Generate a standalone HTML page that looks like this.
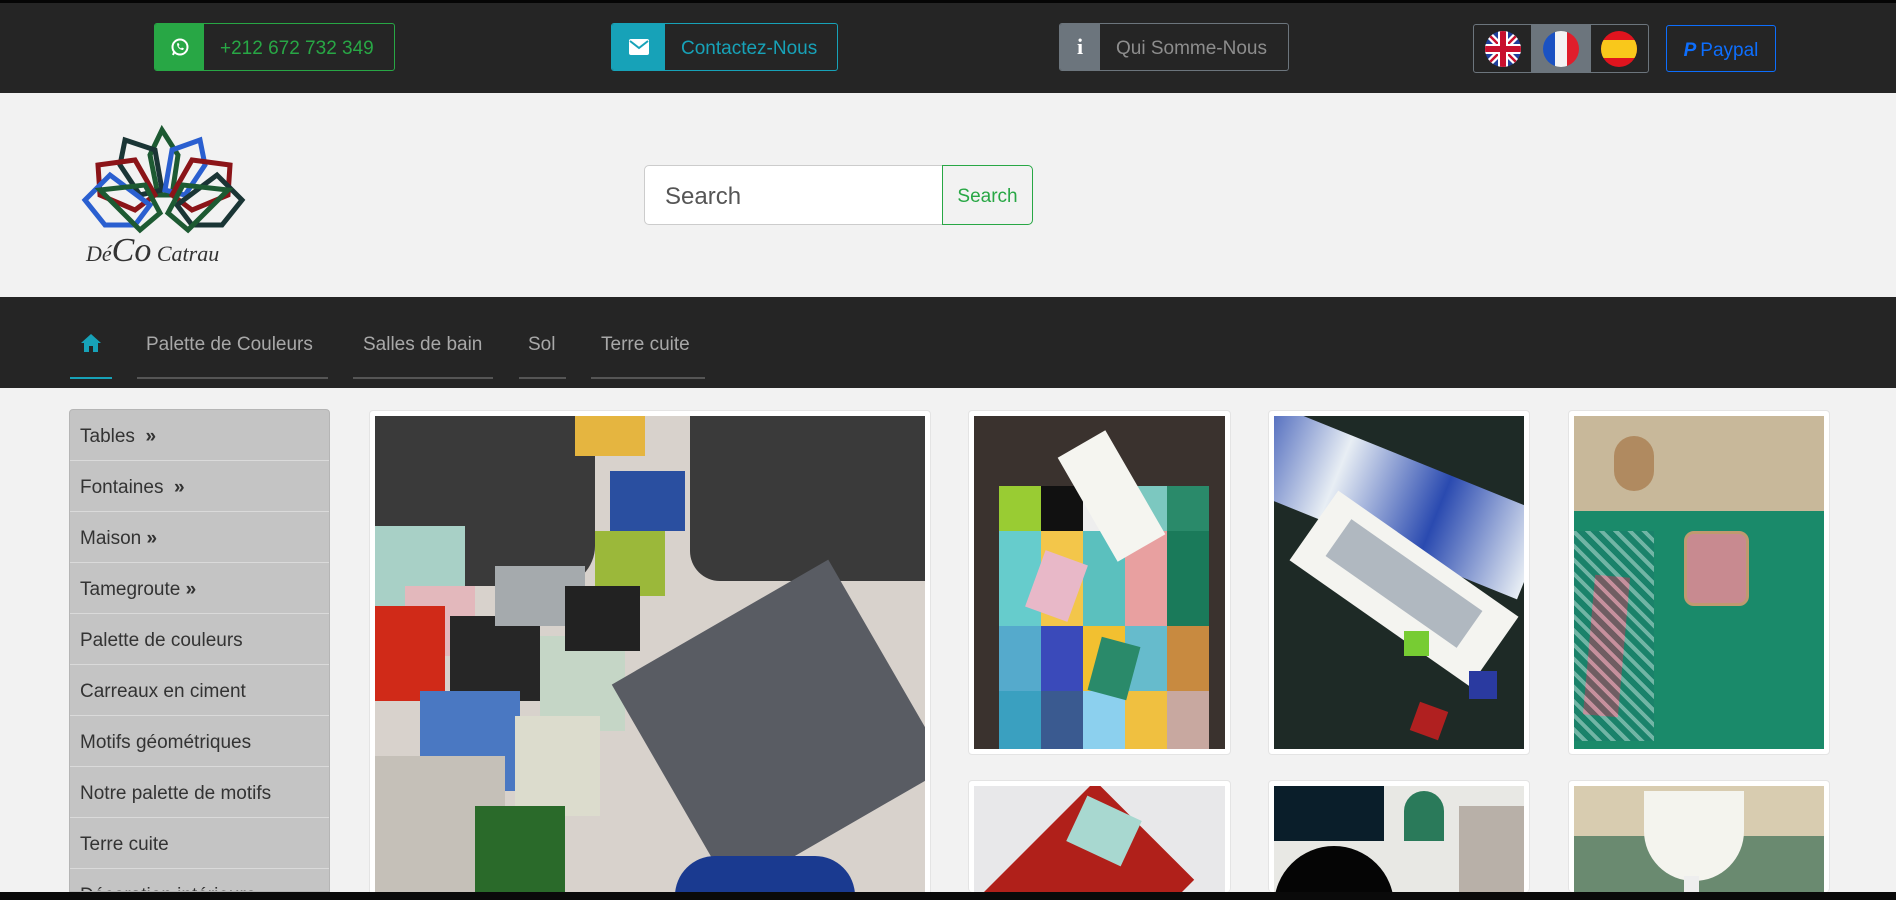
<!DOCTYPE html>
<html style="width:1896px;height:900px;overflow:hidden"><head><meta charset="utf-8"><style>
*{box-sizing:border-box;margin:0;padding:0}
body{width:1896px;height:900px;overflow:hidden;background:#f2f2f2;font-family:"Liberation Sans",sans-serif;position:relative}
.abs{position:absolute}
.top{left:0;top:0;width:1896px;height:93px;background:#252525;border-top:3px solid #050505}
.btn{position:absolute;border-radius:3px;display:flex;overflow:hidden;font-size:19px}
.btn .ic{display:flex;align-items:center;justify-content:center;color:#fff}
.btn .tx{display:flex;align-items:center;padding-left:16px;padding-top:4px}
.hdr{left:0;top:93px;width:1896px;height:204px;background:#f2f2f2}
.nav{left:0;top:297px;width:1896px;height:91px;background:#252525}
.nav .it{position:absolute;top:37px;color:#a8a8a8;font-size:19px}
.side{left:69px;top:409px;width:261px;height:483px;overflow:hidden;background:#c4c4c4;border:1px solid #b5b5b5;border-radius:4px 4px 0 0}
.side div{height:51px;border-bottom:1px solid #dadada;padding-left:10px;font-size:19px;color:#333;line-height:54px}
.card{position:absolute;background:#fff;border:1px solid #e4e4e4;border-radius:4px;padding:5px;overflow:hidden}
.img{width:100%;height:100%;position:relative;overflow:hidden}
.t{position:absolute}
</style></head><body>
<div class="abs top"></div>
<div class="btn" style="left:154px;top:23px;width:241px;height:48px;border:1px solid #28a745">
 <div class="ic" style="width:49px;background:#28a745"><svg width="20" height="20" viewBox="0 0 20 20"><circle cx="10" cy="10" r="7.5" fill="none" stroke="#fff" stroke-width="2"/><path d="M3 18l1.5-4" stroke="#fff" stroke-width="2"/><path d="M7 6.5c0 4 3 6.5 6 6.5l1-1.5-2-1-1 1c-1-.5-2-1.5-2.5-2.5l1-1-1-2z" fill="#fff"/></svg></div>
 <div class="tx" style="color:#28a745">+212 672 732 349</div></div>
<div class="btn" style="left:611px;top:23px;width:227px;height:48px;border:1px solid #17a2b8">
 <div class="ic" style="width:53px;background:#17a2b8"><svg width="20" height="16"><rect x="0" y="0" width="20" height="16" rx="2" fill="#fff"/><path d="M1 2l9 7 9-7" stroke="#17a2b8" stroke-width="2" fill="none"/></svg></div>
 <div class="tx" style="color:#17a2b8">Contactez-Nous</div></div>
<div class="btn" style="left:1059px;top:23px;width:230px;height:48px;border:1px solid #6c757d">
 <div class="ic" style="width:40px;background:#6c757d;font-weight:bold;font-size:22px;font-family:'Liberation Serif',serif">i</div>
 <div class="tx" style="color:#8d8d8d">Qui Somme-Nous</div></div>
<div class="btn" style="left:1473px;top:24px;width:176px;height:49px;border:1px solid #6c757d">
 <div style="width:58px;display:flex;align-items:center;justify-content:center"><svg width="38" height="38" viewBox="0 0 38 38"><defs><clipPath id="c1"><circle cx="19" cy="19" r="18"/></clipPath></defs><g clip-path="url(#c1)"><rect width="38" height="38" fill="#1f3f9b"/><path d="M0 0L38 38M38 0L0 38" stroke="#fff" stroke-width="7"/><path d="M0 0L38 38M38 0L0 38" stroke="#c8102e" stroke-width="2.5"/><path d="M19 0V38M0 19H38" stroke="#fff" stroke-width="10"/><path d="M19 0V38M0 19H38" stroke="#c8102e" stroke-width="6"/></g></svg></div>
 <div style="width:60px;background:#6c757d;display:flex;align-items:center;justify-content:center"><svg width="38" height="38" viewBox="0 0 38 38"><defs><clipPath id="c2"><circle cx="19" cy="19" r="18"/></clipPath></defs><g clip-path="url(#c2)"><rect width="13" height="38" fill="#1b52c2"/><rect x="13" width="12" height="38" fill="#f4f4f4"/><rect x="25" width="13" height="38" fill="#e01e2b"/></g></svg></div>
 <div style="width:58px;display:flex;align-items:center;justify-content:center"><svg width="38" height="38" viewBox="0 0 38 38"><defs><clipPath id="c3"><circle cx="19" cy="19" r="18"/></clipPath></defs><g clip-path="url(#c3)"><rect width="38" height="38" fill="#e0141e"/><rect y="10" width="38" height="18" fill="#f9c81b"/></g></svg></div></div>
<div class="btn" style="left:1666px;top:25px;width:110px;height:47px;border:1px solid #0d6efd;justify-content:center;align-items:center;color:#0d6efd;font-size:19px;padding-top:4px"><b style="font-style:italic;margin-right:4px">P</b>Paypal</div>

<div class="abs hdr"></div>
<svg class="abs" style="left:80px;top:125px" width="170" height="140" viewBox="0 0 170 140">
 <g fill="none" stroke-width="5">
  <path d="M82 5L98 30 92 70 78 70 70 30Z" stroke="#1d5a32"/>
  <path d="M45 15L75 25 82 65 60 70 40 40Z" stroke="#1a3535"/>
  <path d="M120 15L92 25 85 65 105 70 125 40Z" stroke="#2a5fd0"/>
  <path d="M18 40L55 35 75 70 55 85 20 70Z" stroke="#8b1418"/>
  <path d="M150 40L112 35 92 70 112 85 148 70Z" stroke="#8b1418"/>
  <path d="M5 75L30 50 70 80 55 100 25 100Z" stroke="#2a5fd0"/>
  <path d="M162 75L137 50 97 80 112 100 142 100Z" stroke="#1a3535"/>
  <path d="M20 65L65 60 80 88 60 105Z" stroke="#1d5a32"/>
  <path d="M148 65L103 60 88 88 108 105Z" stroke="#1d5a32"/>
 </g>
 <text x="6" y="136" font-family="Liberation Serif,serif" font-style="italic" font-size="22" fill="#333">Dé<tspan font-size="34">Co</tspan> Catrau</text>
</svg>
<div class="abs" style="left:644px;top:165px;width:299px;height:60px;background:#fff;border:1px solid #ccc;border-radius:5px 0 0 5px;font-size:24px;color:#555;line-height:62px;padding-left:20px">Search</div>
<div class="abs" style="left:942px;top:165px;width:91px;height:60px;border:1px solid #28a745;border-radius:0 5px 5px 0;font-size:19px;color:#28a745;line-height:62px;text-align:center">Search</div>

<div class="abs nav">
 <svg class="abs" style="left:80px;top:36px" width="22" height="20" viewBox="0 0 22 20"><path d="M11 1L1 10h3v9h5v-6h4v6h5v-9h3z" fill="#17a2b8"/></svg>
 <div class="it" style="left:146px">Palette de Couleurs</div>
 <div class="it" style="left:363px">Salles de bain</div>
 <div class="it" style="left:528px">Sol</div>
 <div class="it" style="left:601px">Terre cuite</div>
 <div class="abs" style="left:70px;top:80px;width:42px;height:2px;background:#17a2b8"></div>
 <div class="abs" style="left:137px;top:80px;width:191px;height:2px;background:#555"></div>
 <div class="abs" style="left:353px;top:80px;width:140px;height:2px;background:#555"></div>
 <div class="abs" style="left:519px;top:80px;width:47px;height:2px;background:#555"></div>
 <div class="abs" style="left:591px;top:80px;width:114px;height:2px;background:#555"></div>
</div>

<div class="abs side">
 <div>Tables &nbsp;<b>»</b></div><div>Fontaines &nbsp;<b>»</b></div><div>Maison <b>»</b></div><div>Tamegroute <b>»</b></div>
 <div>Palette de couleurs</div><div>Carreaux en ciment</div><div>Motifs géométriques</div><div>Notre palette de motifs</div><div>Terre cuite</div><div>Décoration intérieure</div>
</div>

<div class="card" style="left:369px;top:410px;width:562px;height:482px;border-bottom:none;border-radius:4px 4px 0 0;padding-bottom:0"><div class="img" style="background:#d8d2cc">
 <div class="t" style="left:0;top:0;width:220px;height:170px;background:#3a3a3a;border-radius:0 0 40px 0"></div>
 <div class="t" style="left:315px;top:0;width:235px;height:165px;background:#3a3a3a;border-radius:0 0 0 30px"></div>
 <div class="t" style="left:200px;top:0;width:70px;height:40px;background:#e5b540"></div>
 <div class="t" style="left:235px;top:55px;width:75px;height:60px;background:#2a4fa0"></div>
 <div class="t" style="left:220px;top:115px;width:70px;height:65px;background:#9bb83a"></div>
 <div class="t" style="left:0;top:110px;width:90px;height:80px;background:#a8d0c6"></div>
 <div class="t" style="left:30px;top:170px;width:70px;height:70px;background:#e3b8bc"></div>
 <div class="t" style="left:0;top:190px;width:70px;height:95px;background:#d02a18"></div>
 <div class="t" style="left:75px;top:200px;width:90px;height:85px;background:#262626"></div>
 <div class="t" style="left:120px;top:150px;width:90px;height:60px;background:#a5aaad"></div>
 <div class="t" style="left:165px;top:220px;width:85px;height:95px;background:#c5d6c6"></div>
 <div class="t" style="left:190px;top:170px;width:75px;height:65px;background:#222"></div>
 <div class="t" style="left:45px;top:275px;width:100px;height:100px;background:#4a78c2"></div>
 <div class="t" style="left:140px;top:300px;width:85px;height:100px;background:#dcdccd"></div>
 <div class="t" style="left:0;top:340px;width:130px;height:140px;background:#c5c0b8"></div>
 <div class="t" style="left:100px;top:390px;width:90px;height:90px;background:#2a6a2a"></div>
 <div class="t" style="left:280px;top:190px;width:250px;height:240px;background:#595c63;transform:rotate(-30deg)"></div>
 <div class="t" style="left:300px;top:440px;width:180px;height:80px;background:#1a3a90;border-radius:40px"></div>
</div></div>

<div class="card" style="left:968px;top:410px;width:263px;height:345px"><div class="img" style="background:#3a322e">
 <div class="t" style="left:25px;top:70px;width:210px;height:190px;background:linear-gradient(90deg,#9c3 0 20%,#111 20% 40%,#eee 40% 60%,#7cc8c0 60% 80%,#2a8a6a 80%)"></div>
 <div class="t" style="left:25px;top:115px;width:210px;height:145px;background:linear-gradient(90deg,#6cc 0 20%,#f3c64a 20% 40%,#5bc0be 40% 60%,#e8a0a0 60% 80%,#1a7a5a 80%)"></div>
 <div class="t" style="left:25px;top:210px;width:210px;height:75px;background:linear-gradient(90deg,#5ac 0 20%,#3a4aba 20% 40%,#f2c030 40% 60%,#6bc 60% 80%,#c88a40 80%)"></div>
 <div class="t" style="left:25px;top:275px;width:210px;height:60px;background:linear-gradient(90deg,#3aa0c0 0 20%,#3a5a90 20% 40%,#8cd0ee 40% 60%,#f0c040 60% 80%,#c8a8a0 80%)"></div>
 <div class="t" style="left:110px;top:20px;width:55px;height:120px;background:#f5f5f0;transform:rotate(-30deg)"></div>
 <div class="t" style="left:60px;top:140px;width:45px;height:60px;background:#e8b8c8;transform:rotate(20deg)"></div>
 <div class="t" style="left:120px;top:225px;width:40px;height:55px;background:#2a8a6a;transform:rotate(15deg)"></div>
</div></div>

<div class="card" style="left:1268px;top:410px;width:262px;height:345px"><div class="img" style="background:#1e2a26">
 <div class="t" style="left:-20px;top:-20px;width:320px;height:90px;background:linear-gradient(90deg,#2a4ab0,#e8eef4,#2a4ab0,#e8eef4);transform:rotate(22deg);transform-origin:0 0"></div>
 <div class="t" style="left:20px;top:130px;width:220px;height:85px;background:#f4f4f0;transform:rotate(35deg)"></div>
 <div class="t" style="left:50px;top:145px;width:160px;height:45px;background:#b0b8c0;transform:rotate(35deg)"></div>
 <div class="t" style="left:130px;top:215px;width:25px;height:25px;background:#7c3"></div>
 <div class="t" style="left:140px;top:290px;width:30px;height:30px;background:#b02020;transform:rotate(20deg)"></div>
 <div class="t" style="left:195px;top:255px;width:28px;height:28px;background:#2a3aa0"></div>
</div></div>

<div class="card" style="left:1568px;top:410px;width:262px;height:345px"><div class="img" style="background:#1a8a6a">
 <div class="t" style="left:0;top:0;width:260px;height:95px;background:#c8b89a"></div>
 <div class="t" style="left:40px;top:20px;width:40px;height:55px;background:#b08a60;border-radius:20px"></div>
 <div class="t" style="left:110px;top:115px;width:65px;height:75px;border:3px solid #c09a70;border-radius:10px;background:#c88a90"></div>
 <div class="t" style="left:15px;top:160px;width:35px;height:140px;background:#c4405a;transform:rotate(5deg)"></div>
 <div class="t" style="left:0;top:115px;width:80px;height:210px;background:repeating-linear-gradient(45deg,#1a7a6a 0 6px,#c8e0e0 6px 10px);opacity:.5"></div>
</div></div>

<div class="card" style="left:968px;top:780px;width:263px;height:112px;padding-bottom:0;border-bottom:none"><div class="img" style="background:#e8e8ea">
 <div class="t" style="left:0;top:45px;width:200px;height:140px;background:#b0201a;transform:rotate(-45deg)"></div>
 <div class="t" style="left:100px;top:20px;width:60px;height:50px;background:#a8d8d0;transform:rotate(25deg)"></div>
</div></div>
<div class="card" style="left:1268px;top:780px;width:262px;height:112px;padding-bottom:0;border-bottom:none"><div class="img" style="background:#e8e8e4">
 <div class="t" style="left:0;top:0;width:110px;height:55px;background:#0a1e2a"></div>
 <div class="t" style="left:0;top:60px;width:120px;height:90px;background:#050505;border-radius:60px 60px 0 0"></div>
 <div class="t" style="left:130px;top:5px;width:40px;height:50px;background:#2a7a5a;border-radius:20px 20px 0 0"></div>
 <div class="t" style="left:185px;top:20px;width:75px;height:120px;background:#b8b0a8"></div>
</div></div>
<div class="card" style="left:1568px;top:780px;width:262px;height:112px;padding-bottom:0;border-bottom:none"><div class="img" style="background:#6a8a70">
 <div class="t" style="left:0;top:0;width:260px;height:50px;background:#d8ccb0"></div>
 <div class="t" style="left:70px;top:5px;width:100px;height:90px;background:#f4f4ee;border-radius:0 0 50px 50px"></div>
 <div class="t" style="left:110px;top:90px;width:15px;height:60px;background:#eee"></div>
</div></div>

<div class="abs" style="left:0;top:892px;width:1896px;height:8px;background:#0a0a0a"></div>
</body></html>
